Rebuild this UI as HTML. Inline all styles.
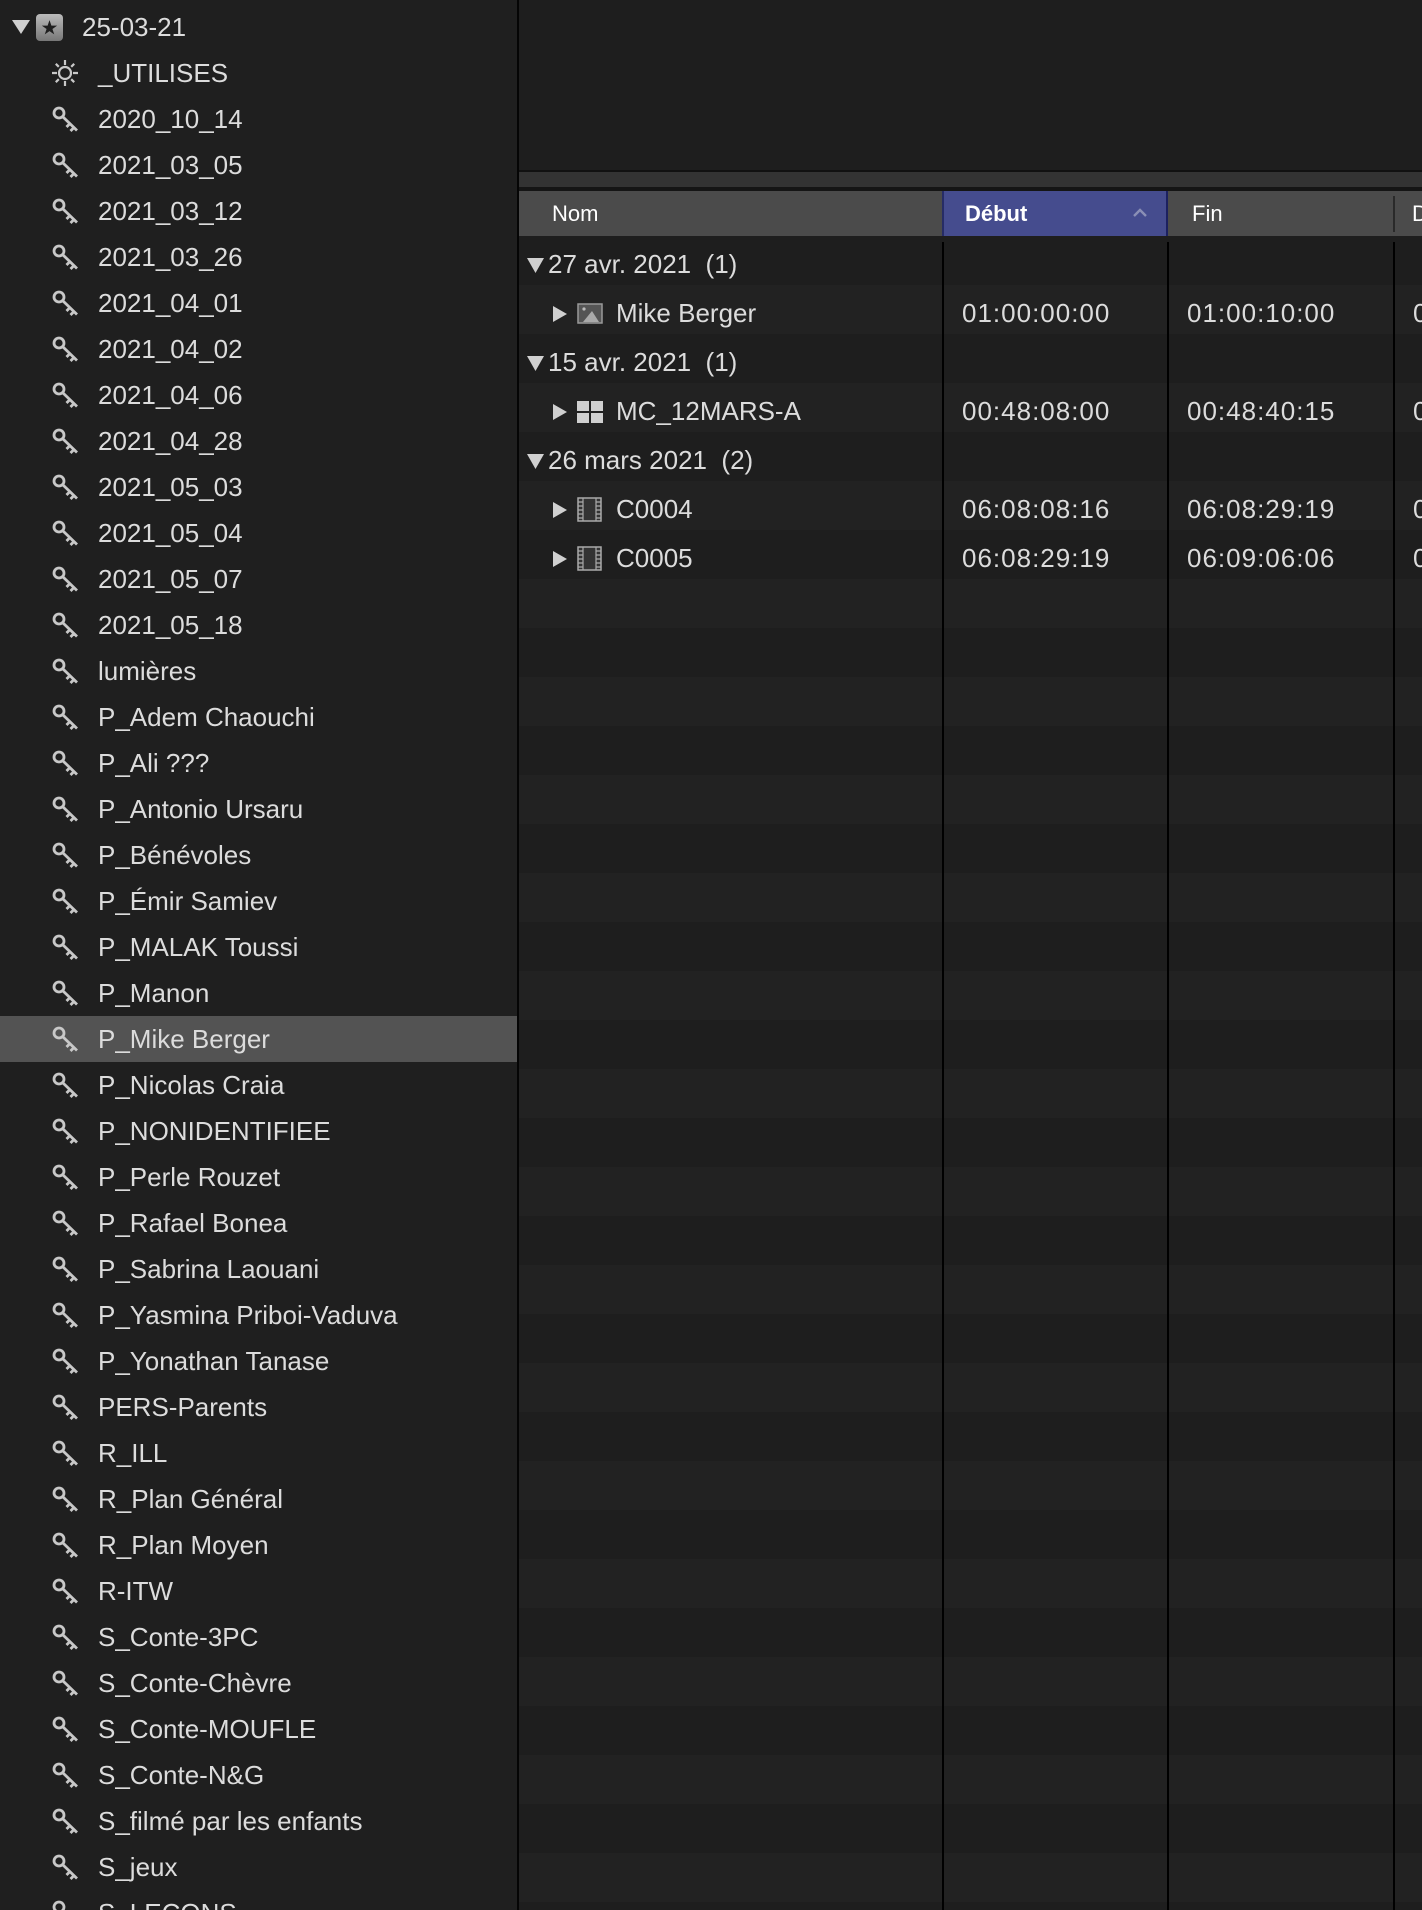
<!DOCTYPE html>
<html><head><meta charset="utf-8"><style>
*{margin:0;padding:0;box-sizing:border-box}
html,body{width:1422px;height:1910px;overflow:hidden;background:#1e1e1e}
body{font-family:"Liberation Sans","DejaVu Sans",sans-serif;color:#dcdcdc}
#wrap{position:relative;width:1422px;height:1910px;overflow:hidden}
#side{position:absolute;left:0;top:0;width:517px;height:1910px;background:#1f1f1f;overflow:hidden}
#sep{position:absolute;left:517px;top:0;width:2px;height:1910px;background:#050505}
.r{position:absolute;left:0;width:517px;height:46px;font-size:26px;line-height:46px}
.r .t{position:absolute;left:98px;top:0}
.r svg{position:absolute;left:50px;top:9px}
.sel{background:#535353}
#right{position:absolute;left:519px;top:0;width:903px;height:1910px;overflow:hidden}
.tr{position:absolute;left:0;right:0;height:49px;font-size:26px;line-height:49px}
.cell{position:absolute;top:0}
.tm{letter-spacing:1px}
</style></head><body><div id="wrap">
<div id="side">
<div class="r" style="top:4px">
<svg style="left:12px;top:16px" width="18" height="14"><path d="M0 0H18L9 14Z" fill="#cfcfcf"/></svg>
<div style="position:absolute;left:36px;top:10px;width:27px;height:27px;border-radius:4px;background:linear-gradient(#bbb,#777)"></div>
<svg style="left:39px;top:13px" width="21" height="21" viewBox="0 0 20 20"><path d="M10 3L11.8 8.2H17.3L12.8 11.4L14.5 16.6L10 13.4L5.5 16.6L7.2 11.4L2.7 8.2H8.2Z" fill="#1f1f1f"/></svg>
<span class="t" style="left:82px">25-03-21</span></div>
<div class="r" style="top:50px"><svg width="30" height="28" viewBox="0 0 30 28"><g stroke="#c8c8c8" stroke-width="2.2" fill="none"><circle cx="15" cy="14" r="6"/><path d="M15 1v5M15 22v5M2 14h5M23 14h5M5.8 4.8l3 3M21.2 20.2l3 3M5.8 23.2l3-3M21.2 7.8l3-3"/></g></svg><span class="t">_UTILISES</span></div>
</div>
<div id="sep"></div>
<div id="right">
<div style="position:absolute;left:0;right:0;top:170px;height:2px;background:#111"></div>
<div style="position:absolute;left:0;right:0;top:172px;height:15px;background:#333"></div>
<div style="position:absolute;left:0;right:0;top:187px;height:4px;background:#151515"></div>
<div style="position:absolute;left:0;right:0;top:191px;height:45px;background:#4b4b4b"></div>
<div style="position:absolute;left:423px;width:226px;top:191px;height:45px;background:#454c8e;border-left:2px solid #262c66;border-right:2px solid #1c2160"></div>
<div style="position:absolute;left:874px;width:2px;top:196px;height:36px;background:#2a2a2a"></div>
<div style="position:absolute;left:33px;top:191px;line-height:45px;font-size:22px;color:#fff">Nom</div>
<div style="position:absolute;left:446px;top:191px;line-height:45px;font-size:22px;color:#fff;font-weight:bold">Début</div>
<svg style="position:absolute;left:613px;top:208px" width="16" height="10"><path d="M2 8L8 2L14 8" stroke="#8a8fb5" stroke-width="2.4" fill="none"/></svg>
<div style="position:absolute;left:673px;top:191px;line-height:45px;font-size:22px;color:#fff">Fin</div>
<div style="position:absolute;left:893px;top:191px;line-height:45px;font-size:22px;color:#fff">D</div>
<div style="position:absolute;left:0;right:0;top:236px;bottom:0;background:repeating-linear-gradient(#1e1e1e 0 49px,#222 49px 98px)"></div>
<div style="position:absolute;left:423px;width:2px;top:242px;bottom:0;background:#000"></div>
<div style="position:absolute;left:648px;width:2px;top:242px;bottom:0;background:#000"></div>
<div style="position:absolute;left:874px;width:2px;top:242px;bottom:0;background:#000"></div>
<div id="rows"></div>
</div>
</div>
<script>
var items=["2020_10_14","2021_03_05","2021_03_12","2021_03_26","2021_04_01","2021_04_02","2021_04_06","2021_04_28","2021_05_03","2021_05_04","2021_05_07","2021_05_18","lumières","P_Adem Chaouchi","P_Ali ???","P_Antonio Ursaru","P_Bénévoles","P_Émir Samiev","P_MALAK Toussi","P_Manon","P_Mike Berger","P_Nicolas Craia","P_NONIDENTIFIEE","P_Perle Rouzet","P_Rafael Bonea","P_Sabrina Laouani","P_Yasmina Priboi-Vaduva","P_Yonathan Tanase","PERS-Parents","R_ILL","R_Plan Général","R_Plan Moyen","R-ITW","S_Conte-3PC","S_Conte-Chèvre","S_Conte-MOUFLE","S_Conte-N&G","S_filmé par les enfants","S_jeux","S_LEÇONS"];
var key='<svg width="30" height="28" viewBox="0 0 30 28"><g stroke="#c8c8c8" stroke-width="2.8" fill="none"><circle cx="9" cy="8" r="5"/><path d="M12.5 11.5L27 25.5M20 18.5L16.5 22M24 22.5L20.5 26"/></g></svg>';
var s=document.getElementById("side"),h="";
items.forEach(function(t,i){var y=4+46*(i+2);h+='<div class="r'+(t=="P_Mike Berger"?' sel':'')+'" style="top:'+y+'px">'+key+'<span class="t">'+t.replace(/&/g,"&amp;")+'</span></div>';});
s.insertAdjacentHTML("beforeend",h);
var tri='<svg style="position:absolute;left:34px;top:17px" width="14" height="16"><path d="M0 0L14 8L0 16Z" fill="#d0d0d0"/></svg>';
var gtri='<svg style="position:absolute;left:8px;top:18px" width="17" height="15"><path d="M0 0H17L8.5 15Z" fill="#d0d0d0"/></svg>';
var icPhoto='<svg style="position:absolute;left:58px;top:14px" width="26" height="21"><rect x="1" y="1" width="24" height="19" fill="#555" stroke="#999" stroke-width="1.5"/><circle cx="7" cy="6" r="1.6" fill="#bbb"/><path d="M6 19L15 8L22 19Z" fill="#aaa"/></svg>';
var icGrid='<svg style="position:absolute;left:58px;top:14px" width="26" height="22"><rect x="0" y="0" width="12" height="10" fill="#d0d0d0"/><rect x="14" y="0" width="12" height="10" fill="#d0d0d0"/><rect x="0" y="12" width="12" height="10" fill="#d0d0d0"/><rect x="14" y="12" width="12" height="10" fill="#d0d0d0"/></svg>';
var icFilm='<svg style="position:absolute;left:58px;top:12px" width="26" height="25"><rect x="1" y="1" width="23" height="23" fill="#333" stroke="#aaa" stroke-width="1.5"/><path d="M6 1V24M19 1V24M1 5H6M1 9H6M1 13H6M1 17H6M1 21H6M19 5H24M19 9H24M19 13H24M19 17H24M19 21H24" stroke="#aaa" stroke-width="1.2"/></svg>';
var rows=[["g","27 avr. 2021&nbsp; (1)"],["i","Mike Berger",icPhoto,"01:00:00:00","01:00:10:00"],["g","15 avr. 2021&nbsp; (1)"],["i","MC_12MARS-A",icGrid,"00:48:08:00","00:48:40:15"],["g","26 mars 2021&nbsp; (2)"],["i","C0004",icFilm,"06:08:08:16","06:08:29:19"],["i","C0005",icFilm,"06:08:29:19","06:09:06:06"]];
var r="";
rows.forEach(function(o,i){var y=240+49*i;
if(o[0]=="g")r+='<div class="tr" style="top:'+y+'px">'+gtri+'<span class="cell" style="left:29px">'+o[1]+'</span></div>';
else r+='<div class="tr" style="top:'+y+'px">'+tri+o[2]+'<span class="cell" style="left:97px">'+o[1]+'</span><span class="cell tm" style="left:443px">'+o[3]+'</span><span class="cell tm" style="left:668px">'+o[4]+'</span><span class="cell" style="left:894px">0</span></div>';});
document.getElementById("rows").innerHTML=r;
</script>
</body></html>
